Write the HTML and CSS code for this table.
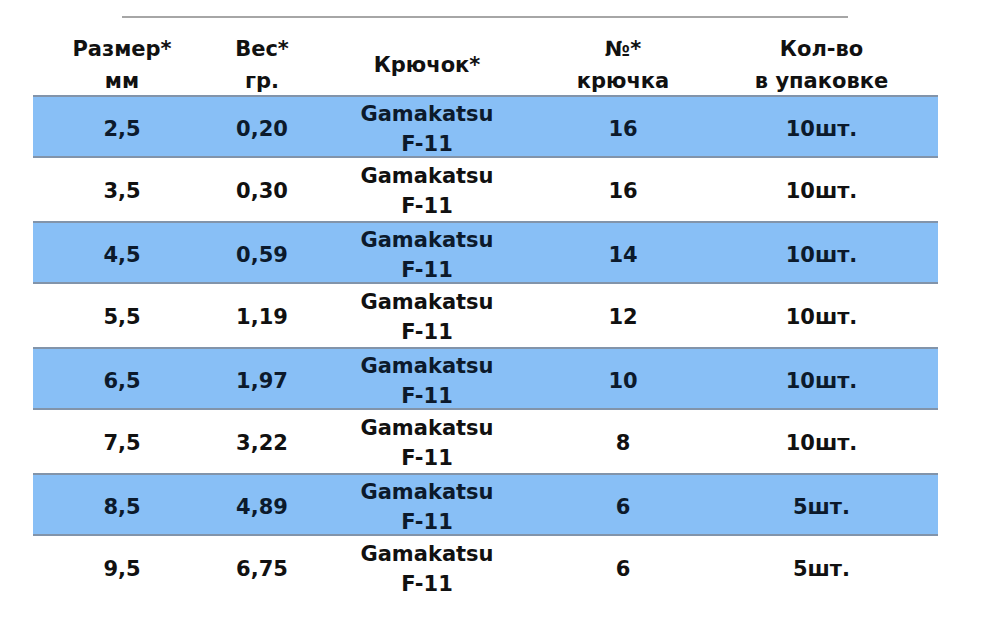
FILE: index.html
```html
<!DOCTYPE html>
<html lang="ru">
<head>
<meta charset="utf-8">
<title>Таблица крючков</title>
<link rel="stylesheet" href="styles.css">
</head>
<body>
<div class="page">
  <div class="topline"></div>
  <div class="table">
    <div class="row head">
      <div class="cell">Размер*<br>мм</div>
      <div class="cell">Вес*<br>гр.</div>
      <div class="cell">Крючок*</div>
      <div class="cell">№*<br>крючка</div>
      <div class="cell">Кол-во<br>в упаковке</div>
    </div>
    <div class="row blue">
      <div class="cell">2,5</div><div class="cell">0,20</div><div class="cell">Gamakatsu<br>F-11</div><div class="cell">16</div><div class="cell">10шт.</div>
    </div>
    <div class="row">
      <div class="cell">3,5</div><div class="cell">0,30</div><div class="cell">Gamakatsu<br>F-11</div><div class="cell">16</div><div class="cell">10шт.</div>
    </div>
    <div class="row blue">
      <div class="cell">4,5</div><div class="cell">0,59</div><div class="cell">Gamakatsu<br>F-11</div><div class="cell">14</div><div class="cell">10шт.</div>
    </div>
    <div class="row">
      <div class="cell">5,5</div><div class="cell">1,19</div><div class="cell">Gamakatsu<br>F-11</div><div class="cell">12</div><div class="cell">10шт.</div>
    </div>
    <div class="row blue">
      <div class="cell">6,5</div><div class="cell">1,97</div><div class="cell">Gamakatsu<br>F-11</div><div class="cell">10</div><div class="cell">10шт.</div>
    </div>
    <div class="row">
      <div class="cell">7,5</div><div class="cell">3,22</div><div class="cell">Gamakatsu<br>F-11</div><div class="cell">8</div><div class="cell">10шт.</div>
    </div>
    <div class="row blue">
      <div class="cell">8,5</div><div class="cell">4,89</div><div class="cell">Gamakatsu<br>F-11</div><div class="cell">6</div><div class="cell">5шт.</div>
    </div>
    <div class="row">
      <div class="cell">9,5</div><div class="cell">6,75</div><div class="cell">Gamakatsu<br>F-11</div><div class="cell">6</div><div class="cell">5шт.</div>
    </div>
  </div>
</div>
</body>
</html>
```
FILE: styles.css
```css
html, body {
  margin: 0;
  padding: 0;
  background: #ffffff;
}
.page {
  width: 1000px;
  height: 637px;
  padding-top: 16px;
  box-sizing: border-box;
  font-family: "DejaVu Sans", Verdana, sans-serif;
  font-weight: bold;
  font-size: 21px;
  color: #111111;
}
.topline {
  margin-left: 122px;
  width: 726px;
  height: 2px;
  background: #a6a6a6;
}
.table {
  margin-left: 33px;
  width: 905px;
  margin-top: 13px;
}
.row {
  display: grid;
  grid-template-columns: 178px 102px 228px 164px 233px;
  height: 63px;
  box-sizing: border-box;
}
.row.head {
  height: 64px;
  line-height: 32px;
}
.row.blue {
  background: #88bff6;
  border-top: 2px solid #8294aa;
  border-bottom: 2px solid #8294aa;
  color: #0c1a2c;
}
.cell {
  display: flex;
  align-items: center;
  justify-content: center;
  text-align: center;
  line-height: 30px;
  padding-top: 2px;
}
.head .cell {
  line-height: 32px;
}
```
